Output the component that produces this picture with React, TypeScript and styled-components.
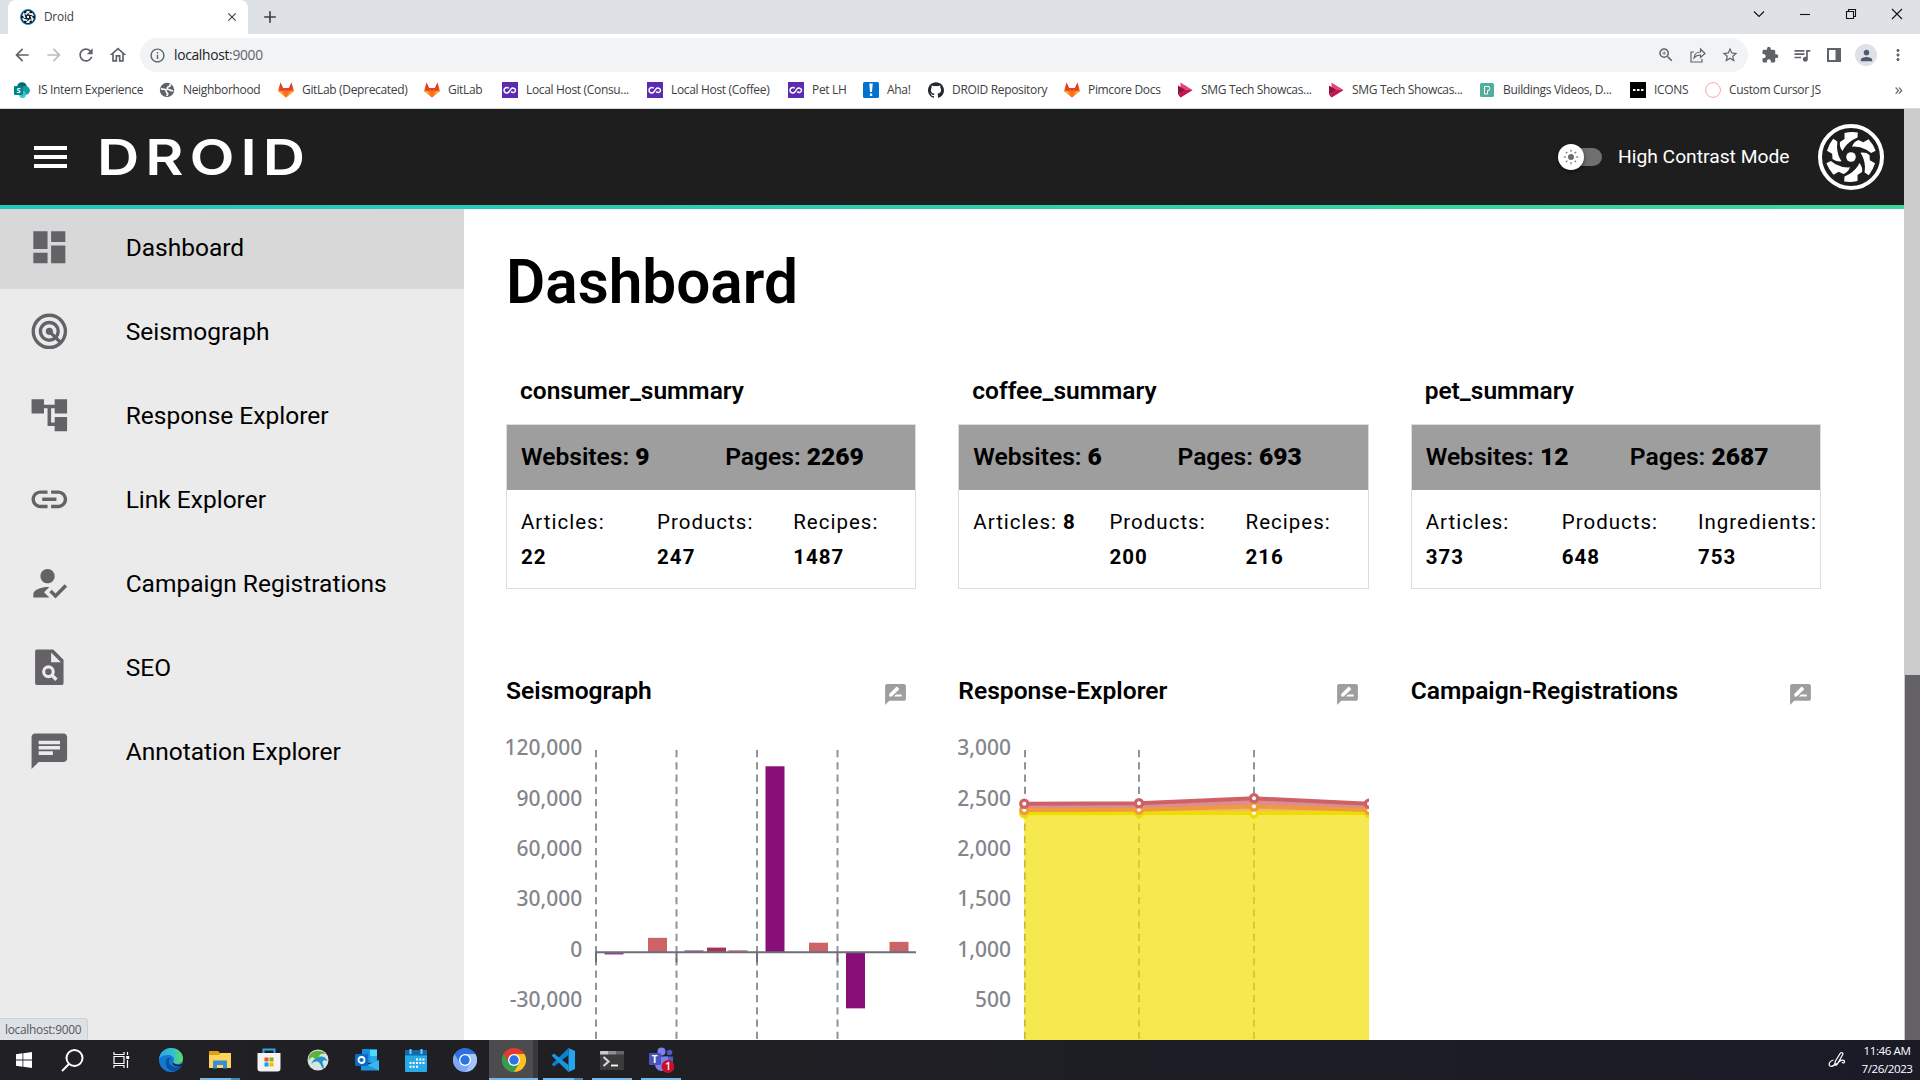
import React from "react";
import styled, { createGlobalStyle, css } from "styled-components";
import {
  MdAccountTree,
  MdAdd,
  MdArrowBack,
  MdArrowForward,
  MdChat,
  MdClose,
  MdDashboard,
  MdExtension,
  MdHowToReg,
  MdInfoOutline,
  MdLink,
  MdMoreVert,
  MdOutlineHome,
  MdPerson,
  MdQueueMusic,
  MdRateReview,
  MdRefresh,
  MdStarBorder,
  MdZoomIn,
} from "react-icons/md";
import { SiGithub } from "react-icons/si";

const uiFont = '"Open Sans", "Noto Sans", sans-serif';
const appFont = 'Roboto, "Liberation Sans", sans-serif';

const GlobalStyle = createGlobalStyle`
  * { box-sizing: border-box; }
  body { margin: 0; background: #fff; overflow: hidden; }
  h1, h2, p { margin: 0; }
  svg { display: block; flex: none; }
`;

const Screen = styled.div`
  width: 1920px;
  height: 1080px;
  display: flex;
  flex-direction: column;
  overflow: hidden;
  font-family: ${appFont};
  color: #000;
`;

/* ---------- browser chrome ---------- */

const TabStrip = styled.div`
  height: 34px;
  flex: none;
  display: flex;
  padding-left: 8px;
  background: #dee1e6;
  font-family: ${uiFont};
`;

const Tab = styled.div`
  width: 240px;
  height: 34px;
  display: flex;
  align-items: center;
  padding: 0 9px 0 12px;
  border-radius: 8px 8px 0 0;
  background: #fff;
  color: #3c4043;
`;

const TabTitle = styled.span`
  flex: 1;
  padding: 0 0 2px 8px;
  font-size: 11.8px;
  letter-spacing: -0.2px;
`;

const NewTab = styled.div`
  display: flex;
  align-items: center;
  padding-left: 12px;
  color: #3c4043;
`;

const WindowControls = styled.div`
  margin-left: auto;
  display: flex;
  height: 34px;
`;

const WindowButton = styled.div`
  width: 46px;
  height: 34px;
  display: flex;
  align-items: center;
  justify-content: center;
  padding-bottom: 6px;
`;

const Toolbar = styled.div`
  height: 39px;
  flex: none;
  display: flex;
  align-items: center;
  padding: 4px 6px 1px;
  background: #fff;
  font-family: ${uiFont};
  color: #5f6368;
`;

const ToolButton = styled.div<{ $dim?: boolean }>`
  width: 32px;
  display: flex;
  justify-content: center;
  color: ${(p) => (p.$dim ? "#bbbdbf" : "#5f6368")};
`;

const Address = styled.div`
  width: 1608px;
  height: 34px;
  margin-left: 6px;
  margin-right: 6px;
  padding: 0 2px 0 9px;
  display: flex;
  align-items: center;
  border-radius: 17px;
  background: #f1f3f4;
`;

const Url = styled.span`
  flex: 1;
  padding: 0 0 1px 8px;
  font-size: 13.8px;
  letter-spacing: -0.3px;
  color: #5f6368;
  b { font-weight: 400; color: #202124; }
`;

const Avatar = styled.div`
  width: 22px;
  height: 22px;
  display: flex;
  align-items: center;
  justify-content: center;
  border-radius: 50%;
  background: #dee1e6;
  color: #4f5b70;
`;

const BookmarkBar = styled.div`
  height: 36px;
  flex: none;
  display: flex;
  align-items: center;
  padding: 0 17px 1px 14px;
  border-bottom: 1px solid #d5d9da;
  background: #fff;
  font-family: ${uiFont};
`;

const Bookmark = styled.div<{ $w: number }>`
  width: ${(p) => p.$w}px;
  flex: none;
  display: flex;
  align-items: center;
  gap: 8px;
  white-space: nowrap;
  color: #3c4043;
`;

const BookmarkLabel = styled.span`
  padding-bottom: 2px;
  font-size: 12px;
  letter-spacing: -0.33px;
`;

const More = styled.span`
  margin-left: auto;
  padding-bottom: 3px;
  font-size: 17px;
  line-height: 20px;
  color: #5f6368;
`;

/* ---------- application ---------- */

const Viewport = styled.div`
  height: 931px;
  flex: none;
  display: flex;
`;

const Page = styled.div`
  width: 1904px;
  display: flex;
  flex-direction: column;
`;

const Scrollbar = styled.div`
  width: 16px;
  padding-left: 1px;
  display: flex;
  flex-direction: column;
  justify-content: flex-end;
  background: #cbcbcb;
`;

const Thumb = styled.div`
  height: 365px;
  background: #646266;
`;

const Header = styled.header`
  height: 96px;
  flex: none;
  display: flex;
  align-items: center;
  padding: 0 20px 0 34px;
  background: #1e1e1e;
  color: #fff;
`;

const Accent = styled.div`
  height: 4px;
  flex: none;
  background: linear-gradient(90deg, #20c8be, #3ad79b);
`;

const Burger = styled.div`
  width: 33px;
  display: grid;
  gap: 5px;
`;

const BurgerLine = styled.span`
  height: 4px;
  background: #fff;
`;

const Wordmark = styled.div`
  flex: 1;
  margin-left: 30px;
  font-family: Inter, sans-serif;
  font-weight: 600;
  font-size: 49.5px;
  line-height: 60px;
  letter-spacing: 5px;
  transform: scaleX(1.185);
  transform-origin: left;
`;

const Switch = styled.div`
  width: 44px;
  height: 18px;
  margin-right: 16px;
  display: flex;
  align-items: center;
`;

const SwitchTrack = styled.div`
  width: 38px;
  height: 18px;
  margin-left: 6px;
  display: flex;
  align-items: center;
  border-radius: 9px;
  background: #6f6f6f;
`;

const SwitchKnob = styled.div`
  width: 26px;
  height: 26px;
  flex: none;
  margin-left: -6px;
  display: flex;
  align-items: center;
  justify-content: center;
  border-radius: 50%;
  background: #fff;
  box-shadow: 0 2px 4px rgba(0, 0, 0, 0.5);
`;

const SwitchLabel = styled.span`
  width: 200px;
  padding-bottom: 1px;
  font-size: 19.25px;
  white-space: nowrap;
`;

const Body = styled.div`
  flex: 1;
  min-height: 0;
  display: flex;
`;

const Sidebar = styled.nav`
  width: 464px;
  flex: none;
  display: flex;
  flex-direction: column;
  overflow: hidden;
  background: #ebebeb;
`;

const NavItem = styled.div<{ $active?: boolean }>`
  height: 84px;
  flex: none;
  display: flex;
  align-items: center;
  gap: 55.5px;
  padding-left: 27.5px;
  font-size: 24.5px;
  color: #000;
  svg { color: #646266; }
  ${(p) =>
    p.$active &&
    css`
      height: 80px;
      padding-bottom: 4px;
      background: #d8d8d8;
    `}
`;

const StatusBubble = styled.div`
  width: 88px;
  height: 22px;
  margin-top: auto;
  padding-left: 5px;
  border: 1px solid #cdd0d5;
  border-width: 1px 1px 0 0;
  border-radius: 0 4px 0 0;
  background: #dee1e6;
  font-family: ${uiFont};
  font-size: 11.9px;
  line-height: 21px;
  letter-spacing: -0.28px;
  color: #54585d;
`;

const Main = styled.main`
  flex: 1;
  padding: 38px 83px 0 42px;
  overflow: hidden;
`;

const Heading = styled.h1`
  margin-bottom: 58px;
  font-size: 60.3px;
  line-height: 71px;
  font-weight: 600;
`;

const Columns = styled.section`
  display: grid;
  grid-template-columns: repeat(3, minmax(0, 1fr));
  column-gap: 42px;
`;

const SummaryTitle = styled.h2`
  margin-bottom: 18px;
  padding-left: 14px;
  font-size: 24.5px;
  line-height: 30px;
  font-weight: 600;
`;

const Card = styled.div`
  height: 165px;
  border: 1px solid #dddddd;
`;

const Totals = styled.div`
  height: 65px;
  display: grid;
  grid-template-columns: 1fr 1fr;
  background: #9e9e9e;
  font-size: 24.6px;
  line-height: 63px;
  font-weight: 600;
  > span { padding-left: 14px; }
`;

const Counts = styled.div`
  display: grid;
  grid-template-columns: repeat(3, minmax(0, 1fr));
  padding-top: 15px;
  font-size: 20.5px;
  line-height: 34.67px;
  letter-spacing: 1px;
  > span { padding: 0 14px; }
  b { font-weight: 700; }
`;

const Charts = styled(Columns)`
  margin-top: 86px;
`;

const ChartHeader = styled.div`
  height: 30px;
  display: flex;
  justify-content: space-between;
  padding-right: 8.5px;
  svg { margin-top: 7px; color: #9e9e9e; }
`;

const ChartTitle = styled.h2`
  font-size: 24.6px;
  line-height: 32px;
  font-weight: 600;
`;

const ChartSvg = styled.svg`
  width: 100%;
  height: 335px;
  overflow: hidden;
`;

/* ---------- taskbar ---------- */

const Taskbar = styled.div`
  height: 40px;
  flex: none;
  display: flex;
  background: linear-gradient(90deg, #212024, #1f1f24 40%, #1b1b28);
  font-family: ${uiFont};
  color: #fff;
`;

const TaskButton = styled.div<{ $w?: number; $active?: boolean }>`
  width: ${(p) => p.$w ?? 49}px;
  height: 40px;
  flex: none;
  display: flex;
  flex-direction: column;
  align-items: center;
  background: ${(p) => (p.$active ? "linear-gradient(90deg, #4c4c4f 44px, #39393c 44px)" : "none")};
`;

const TaskIcon = styled.div`
  height: 38px;
  display: flex;
  align-items: center;
  padding-top: 2px;
`;

const Underline = styled.div<{ $wide?: boolean; $stacked?: boolean }>`
  width: ${(p) => (p.$wide ? "100%" : "40px")};
  height: 2px;
  background: ${(p) =>
    p.$stacked ? "linear-gradient(90deg, #76b9ed 78%, #4f84ab 78%)" : "#76b9ed"};
`;

const Tray = styled.div`
  margin-left: auto;
  display: flex;
  align-items: center;
  gap: 8px;
`;

const Clock = styled.div`
  width: 66px;
  display: grid;
  padding-bottom: 1px;
  font-size: 11.6px;
  line-height: 18px;
  letter-spacing: -0.42px;
  text-align: center;
`;

/* ---------- drawings ---------- */

const Turbine = ({ size, color, ring, back }: { size: number; color: string; ring: string; back: string }) => (
  <svg width={size} height={size} viewBox="-33 -33 66 66">
    <circle r="31" fill={back} stroke={ring} strokeWidth="4" />
    {[0, 60, 120, 180, 240, 300].map((a) => (
      <path
        key={a}
        transform={`rotate(${a})`}
        fill={color}
        d="M-6.500-24Q0-25.500 6.800-24.500L6.500-19.500L1.500-17Q-5.500-12.500-8.500-6Q-12-10.500-11-15L-6.500-18Z"
      />
    ))}
    <circle r="4.800" fill={color} />
  </svg>
);

const SeismographIcon = () => (
  <svg width="42.670" height="42.670" viewBox="0 0 24 24" fill="none" stroke="currentColor" strokeWidth="1.900">
    <circle cx="12" cy="12" r="9.050" />
    <circle cx="12" cy="12" r="5" />
    <circle cx="12" cy="12" r="2" fill="currentColor" stroke="none" />
    <path d="M12 12l6.600 6.600" />
  </svg>
);

const FileSearchIcon = () => (
  <svg width="42.670" height="42.670" viewBox="0 0 24 24">
    <path
      fill="currentColor"
      fillRule="evenodd"
      d="M5 2h9.200L20 7.800V21a1 1 0 0 1-1 1H5a1 1 0 0 1-1-1V3a1 1 0 0 1 1-1zM13 3.700V9.200h5.500z"
    />
    <circle cx="11.500" cy="14.500" r="2.700" fill="none" stroke="#ebebeb" strokeWidth="1.800" />
    <path d="M13.400 16.400l2.600 2.600" stroke="#ebebeb" strokeWidth="1.900" />
  </svg>
);

const GitlabMark = () => (
  <svg width="16" height="16" viewBox="0 0 16 16">
    <path fill="#fc6d26" d="M2.500 0.500L5 6h6l2.500-5.500L16 9l-8 6.500L0 9z" />
    <path fill="#e24329" d="M2.500.5L5 6h6L13.500.5 15 7l-7 8L1 7z" />
    <path fill="#fca326" d="M0 9l4.500 0L8 15.500zM16 9h-4.500L8 15.500z" />
    <path fill="#fc6d26" d="M4 8.500h8l-4 7z" />
  </svg>
);

const InfinityMark = () => (
  <svg width="16" height="16" viewBox="0 0 16 16">
    <rect width="16" height="16" fill="#5c2bb0" />
    <path
      d="M6.800 6.300C4.800 4.600 2 5.800 2 8.200s2.800 3.600 4.800 1.900l2-3c1.600-2 4.700-.9 4.700 1.200s-2.700 3.100-4.300 1.200"
      fill="none"
      stroke="#fff"
      strokeWidth="1.500"
    />
  </svg>
);

const StreamMark = () => (
  <svg width="16" height="16" viewBox="0 0 16 16">
    <path fill="#e5457e" d="M3.500.5L15.500 8l-12 7.500z" />
    <path fill="#8e1440" d="M1 3.500L8.500 8 1 12.500z" />
    <path fill="#c3174a" d="M1 12.500L8.500 8h7l-12 7.500z" />
  </svg>
);

const marks = {
  sharepoint: (
    <svg width="16" height="16" viewBox="0 0 16 16">
      <circle cx="8" cy="5" r="4.800" fill="#036c70" />
      <circle cx="11.500" cy="8.500" r="4.400" fill="#1a9ba1" />
      <circle cx="8.500" cy="12.500" r="3.400" fill="#37c6d0" />
      <rect y="4" width="9" height="9" rx="1" fill="#038387" />
      <text x="2.400" y="11.200" fontSize="7.500" fontWeight="700" fill="#fff">S</text>
    </svg>
  ),
  globe: (
    <svg width="16" height="16" viewBox="0 0 16 16">
      <circle cx="8" cy="8" r="7.200" fill="#5f6368" />
      <path d="M2 6.500c2 1.500 4 0 5 1.500s-.5 2 1 3 .500 2-.500 3M14 8.500c-2 1-2.500-1-4.500-1S8 5 10 4.500s1-2 1-2.500" fill="none" stroke="#fff" strokeWidth="1.600" />
    </svg>
  ),
  gitlab: <GitlabMark />,
  infinity: <InfinityMark />,
  aha: (
    <svg width="16" height="16" viewBox="0 0 16 16">
      <rect width="16" height="16" rx="1.500" fill="#0073cf" />
      <path d="M6.300 1.500h3.400L9 10H7z" fill="#fff" />
      <rect x="6.900" y="11.500" width="2.300" height="2.500" fill="#fff" />
    </svg>
  ),
  github: <SiGithub size={16} color="#24292f" />,
  stream: <StreamMark />,
  pad: (
    <svg width="16" height="16" viewBox="0 0 16 16">
      <rect x="1" y="1" width="14" height="14" rx="1.500" fill="#52ad9c" />
      <path d="M5.500 12V4.500h4.500q1.500 2 0 4H8.500V12z" fill="none" stroke="#fff" strokeWidth="1" />
    </svg>
  ),
  dots: (
    <svg width="16" height="16" viewBox="0 0 16 16">
      <rect width="16" height="16" fill="#000" />
      <path d="M3 7h2.500v2H3zM7 7h2.500v2H7zM11 7h2.500v2H11z" fill="#fff" />
    </svg>
  ),
  circle: (
    <svg width="16" height="16" viewBox="0 0 16 16">
      <circle cx="8" cy="8" r="7.400" fill="#fff" stroke="#f8a5a5" strokeWidth="1" />
    </svg>
  ),
};

const bookmarks: { mark: keyof typeof marks; label: string; width: number }[] = [
  { mark: "sharepoint", label: "IS Intern Experience", width: 145 },
  { mark: "globe", label: "Neighborhood", width: 119 },
  { mark: "gitlab", label: "GitLab (Deprecated)", width: 146 },
  { mark: "gitlab", label: "GitLab", width: 78 },
  { mark: "infinity", label: "Local Host (Consu...", width: 145 },
  { mark: "infinity", label: "Local Host (Coffee)", width: 141 },
  { mark: "infinity", label: "Pet LH", width: 75 },
  { mark: "aha", label: "Aha!", width: 65 },
  { mark: "github", label: "DROID Repository", width: 136 },
  { mark: "gitlab", label: "Pimcore Docs", width: 113 },
  { mark: "stream", label: "SMG Tech Showcas...", width: 151 },
  { mark: "stream", label: "SMG Tech Showcas...", width: 151 },
  { mark: "pad", label: "Buildings Videos, D...", width: 151 },
  { mark: "dots", label: "ICONS", width: 75 },
  { mark: "circle", label: "Custom Cursor JS", width: 120 },
];

const navItems = [
  { label: "Dashboard", icon: <MdDashboard size={42.67} /> },
  { label: "Seismograph", icon: <SeismographIcon /> },
  { label: "Response Explorer", icon: <MdAccountTree size={42.67} /> },
  { label: "Link Explorer", icon: <MdLink size={42.67} /> },
  { label: "Campaign Registrations", icon: <MdHowToReg size={42.67} /> },
  { label: "SEO", icon: <FileSearchIcon /> },
  { label: "Annotation Explorer", icon: <MdChat size={42.67} /> },
];

const summaries = [
  { name: "consumer_summary", websites: 9, pages: 2269, counts: [["Articles", 22], ["Products", 247], ["Recipes", 1487]] },
  { name: "coffee_summary", websites: 6, pages: 693, counts: [["Articles", 8], ["Products", 200], ["Recipes", 216]] },
  { name: "pet_summary", websites: 12, pages: 2687, counts: [["Articles", 373], ["Products", 648], ["Ingredients", 753]] },
];

const AxisLabels = ({ labels, right }: { labels: string[]; right: number }) => (
  <g fontFamily='"Noto Sans", sans-serif' fontSize="21" fontWeight="500" fill="#85858c" textAnchor="end">
    {labels.map((l, i) => (
      <text key={l} x={right} y={50.1 + i * 50.4}>{l}</text>
    ))}
  </g>
);

const GridLines = ({ xs }: { xs: number[] }) => (
  <g stroke="#949494" strokeWidth="2" strokeDasharray="7.250 5">
    {xs.map((x) => (
      <line key={x} x1={x} x2={x} y1="45" y2="335" />
    ))}
  </g>
);

const bars = [
  { x: 98.5, v: -1300, fill: "#9b3b90" },
  { x: 142, v: 8600, fill: "#cc6366" },
  { x: 178.5, v: 1200, fill: "#a95fa3" },
  { x: 201, v: 2800, fill: "#a93056" },
  { x: 222.5, v: 1300, fill: "#dd8282" },
  { x: 259.5, v: 110500, fill: "#870f77" },
  { x: 303, v: 5700, fill: "#cc6366" },
  { x: 340, v: -33300, fill: "#870f77" },
  { x: 383.5, v: 6200, fill: "#cc6366" },
];

const SeismographChart = () => {
  const zero = 247.3;
  const grid = [90, 170.5, 251, 331.5];
  return (
    <ChartSvg>
      <AxisLabels right={76.3} labels={["120,000", "90,000", "60,000", "30,000", "0", "-30,000"]} />
      <GridLines xs={grid} />
      {bars.map((b) => {
        const h = (Math.abs(b.v) / 30000) * 50.5;
        return <rect key={b.x} x={b.x} width="19" y={b.v > 0 ? zero - h : zero} height={h} fill={b.fill} />;
      })}
      <path d={`M89 ${zero}H411${grid.map((x) => `M${x} ${zero}v10`).join("")}`} stroke="#6e7079" strokeWidth="2" fill="none" />
    </ChartSvg>
  );
};

const series = [
  { line: "#eedd05", fill: "#f1e00b", ys: [108.3, 108, 108, 108] },
  { line: "#f09a3e", fill: "#f09a3e", ys: [105, 104.8, 101.5, 105] },
  { line: "#cd6166", fill: "#cd6166", ys: [98.7, 98.3, 93.3, 98.7] },
];

const ResponseChart = () => {
  const xs = [66.3, 181, 296, 411];
  return (
    <ChartSvg>
      <AxisLabels right={53} labels={["3,000", "2,500", "2,000", "1,500", "1,000", "500"]} />
      <GridLines xs={[67, 181, 296]} />
      {series.map((s, n) => {
        const top = xs.map((x, i) => `${x},${s.ys[i]}`).join(" ");
        const base = n === 0 ? `411,335 66.300,335` : xs.map((x, i) => `${x},${series[n - 1].ys[i]}`).reverse().join(" ");
        return <polygon key={s.line} points={`${top} ${base}`} fill={s.fill} fillOpacity="0.72" />;
      })}
      {series.map((s) => (
        <g key={s.line} stroke={s.line} strokeWidth="4" fill="none">
          <polyline points={xs.map((x, i) => `${x},${s.ys[i]}`).join(" ")} />
          {xs.map((x, i) => (
            <circle key={x} cx={x} cy={s.ys[i]} r="3.600" fill="#fff" strokeWidth="3.200" />
          ))}
        </g>
      ))}
    </ChartSvg>
  );
};

const EdgeIcon = () => (
  <svg width="24" height="24" viewBox="0 0 24 24">
    <defs>
      <linearGradient id="edgeTop" x1="0" x2="1">
        <stop offset="0" stopColor="#2aa5e0" />
        <stop offset=".6" stopColor="#35c1d0" />
        <stop offset="1" stopColor="#62de55" />
      </linearGradient>
    </defs>
    <circle cx="12" cy="12" r="12" fill="#1379d0" />
    <path d="M0 11C1 4 6 0 12 0c7 0 12 5 12 10 0 4-3 6-6 6-2 0-4-1-4-2 0-.5 1-1 1-2.500C15 8 11 6.500 8 7c-4 .5-7 2-8 4z" fill="url(#edgeTop)" />
    <path d="M8 11c-3 6 1 13 8 12 3-.5 5-2 6.500-5-5 2.500-11 1-12.500-3-.5-2 .5-4 1.500-5-1.500-.5-2.800 0-3.500 1z" fill="#0c4fa0" />
    <path d="M14.500 14.500c1.500 2.500 5 3 9 1l-1 2.500c-4 1-8 0-9-2.500z" fill="#202024" />
  </svg>
);

const FolderIcon = () => (
  <svg width="22" height="20" viewBox="0 0 22 20">
    <path d="M0 1h9l2 2h10v4H0z" fill="#e0a010" />
    <path d="M0 5h10l2-2h10v15H0z" fill="#ffd35c" />
    <path d="M4 18.500V11.500q0-1 1-1h12q1 0 1 1v7h-4V15H8v3.500z" fill="#3590dc" />
  </svg>
);

const StoreIcon = () => (
  <svg width="24" height="24" viewBox="0 0 24 24">
    <path d="M6.500 6V1.500h11V6" fill="none" stroke="#2fa7e7" strokeWidth="2" />
    <path d="M.500 5h23v15.500a3 3 0 0 1-3 3h-17a3 3 0 0 1-3-3z" fill="#f3f3f3" />
    <path d="M7.500 9.500h4v4h-4z" fill="#f25022" />
    <path d="M12.500 9.500h4v4h-4z" fill="#7fba00" />
    <path d="M7.500 14.500h4v4h-4z" fill="#00a4ef" />
    <path d="M12.500 14.500h4v4h-4z" fill="#ffb900" />
  </svg>
);

const SwirlIcon = () => (
  <svg width="22" height="22" viewBox="0 0 22 22">
    <circle cx="11" cy="11" r="10.500" fill="#d7e5e2" />
    <path d="M2 7C5 1 14 0 19 5c-4-1-7 0-7 3s-3 3-5 1-4 0-5.500 3z" fill="#5fb238" />
    <path d="M11 9c3-3 8-1 9.500 3-2-1-5-1-5 1s2 4 1 7c-2-1-2-4-4-6s-5-2-8 1c1-4 4-6 6.500-6z" fill="#2493c6" />
  </svg>
);

const OutlookIcon = () => (
  <svg width="24" height="22" viewBox="0 0 24 22">
    <rect x="7" width="15" height="14" fill="#1490df" />
    <path d="M15 1h7v6h-7z" fill="#50d9ff" />
    <path d="M15 7h7v6h-7z" fill="#28a8ea" />
    <path d="M6 21.500V12l9 5 9-5.500v10z" fill="#1f94dd" />
    <path d="M24 11v10.500L12 16z" fill="#35b8f1" />
    <rect y="5" width="13" height="12" rx="1" fill="#0a6ac4" />
    <circle cx="6.500" cy="11" r="3" fill="none" stroke="#fff" strokeWidth="1.800" />
  </svg>
);

const CalendarIcon = () => (
  <svg width="22" height="23" viewBox="0 0 22 23">
    <rect y="1" width="22" height="22" rx="1" fill="#29aae8" />
    <rect y="1" width="22" height="5.500" fill="#136ba8" />
    <path d="M4.500 0h2v5h-2zM15.500 0h2v5h-2z" fill="#6fd3f7" />
    <path
      d="M11 9.500h2v2h-2zM14.300 9.500h2v2h-2zM17.500 9.500h2v2h-2zM4.500 13h2v2h-2zM7.700 13h2v2h-2zM11 13h2v2h-2zM14.300 13h2v2h-2zM17.500 13h2v2h-2zM4.500 16.700h2v2h-2zM7.700 16.700h2v2h-2zM11 16.700h2v2h-2z"
      fill="#fff"
    />
  </svg>
);

const ChromeIcon = ({ a, b, c, core }: { a: string; b: string; c: string; core: string }) => (
  <svg width="24" height="24" viewBox="0 0 24 24">
    <circle cx="12" cy="12" r="12" fill={a} />
    <path d="M1.600 6A12 12 0 0 0 12 24L17.200 15H6.800z" fill={b} />
    <path d="M12 24A12 12 0 0 0 22.400 6H12L17.200 15z" fill={c} />
    <circle cx="12" cy="12" r="6" fill="#fff" />
    <circle cx="12" cy="12" r="4.700" fill={core} />
  </svg>
);

const CodeIcon = () => (
  <svg width="24" height="24" viewBox="0 0 24 24">
    <path d="M17.500 0L24 3v18l-6.500 3z" fill="#25a5ef" />
    <path d="M17.500 0v7L3 18.500 .500 16.500z" fill="#0a7fcb" />
    <path d="M17.500 24v-7L3 5.500 .500 7.500z" fill="#1b93dc" />
  </svg>
);

const TerminalIcon = () => (
  <svg width="24" height="19" viewBox="0 0 24 19">
    <rect width="24" height="19" rx="1" fill="#3b3b3b" />
    <path d="M0 3.500V1q0-1 1-1h7v3.500z" fill="#c9c9c9" />
    <path d="M8 0h8v3.500H8z" fill="#8f8f8f" />
    <path d="M16 0h7q1 0 1 1v2.500h-8z" fill="#666" />
    <path d="M3.500 6l5 4.500-5 4.500" fill="none" stroke="#d5d5d5" strokeWidth="2.200" />
    <path d="M11 14.500h7" stroke="#fff" strokeWidth="1.800" />
  </svg>
);

const TeamsIcon = () => (
  <svg width="26" height="26" viewBox="0 0 26 26">
    <circle cx="13.500" cy="4.500" r="4" fill="#7b83eb" />
    <circle cx="21.500" cy="5.500" r="2.800" fill="#5059c9" />
    <path d="M16 9.500h9v9h-9z" fill="#5059c9" />
    <path d="M7 9.500h13v8a6.500 6.500 0 0 1-13 0z" fill="#7b83eb" />
    <rect x="1" y="6" width="12" height="12" rx="1" fill="#4b53bc" />
    <text x="3.800" y="15.500" fontFamily="Open Sans" fontSize="10" fontWeight="700" fill="#fff">T</text>
    <circle cx="20" cy="19.500" r="6.500" fill="#c8102e" />
    <text x="17.300" y="23.200" fontFamily="Open Sans" fontSize="10" fontWeight="600" fill="#fff">1</text>
  </svg>
);

const systemButtons = [
  <svg key="start" width="16" height="16" viewBox="0 0 16 16" fill="#fff">
    <path d="M0 2.200L6.500 1.300V7.600H0zM7.300 1.200L16 0V7.600H7.300zM0 8.400h6.500v6.300L0 13.800zM7.300 8.400H16V16l-8.700-1.200z" />
  </svg>,
  <svg key="search" width="23" height="23" viewBox="0 0 23 23" fill="none" stroke="#fff" strokeWidth="2">
    <circle cx="13.500" cy="9" r="8" />
    <path d="M8 15l-7 7" />
  </svg>,
  <svg key="view" width="17" height="16" viewBox="0 0 17 16" fill="none" stroke="#fff" strokeWidth="1.200">
    <path d="M1 4.500h10v7H1zM1 0v2.500h10V0M1 16v-2.500h10V16M14.500 0v3M14.500 8v8" />
    <path d="M13.200 4h3v3h-3z" fill="#fff" stroke="none" />
  </svg>,
];

const apps: { icon: React.ReactNode; running?: boolean; stacked?: boolean; active?: boolean }[] = [
  { icon: <EdgeIcon /> },
  { icon: <FolderIcon />, running: true, stacked: true },
  { icon: <StoreIcon /> },
  { icon: <SwirlIcon /> },
  { icon: <OutlookIcon /> },
  { icon: <CalendarIcon /> },
  { icon: <ChromeIcon a="#2f6fe0" b="#7fa8f2" c="#a6c3f8" core="#2a74e8" /> },
  { icon: <ChromeIcon a="#e33b2e" b="#2da14c" c="#fcc31e" core="#2a74e8" />, running: true, active: true },
  { icon: <CodeIcon />, running: true, stacked: true },
  { icon: <TerminalIcon />, running: true },
  { icon: <TeamsIcon />, running: true },
];

const WindowGlyph = ({ d }: { d: string }) => (
  <svg width="12" height="12" viewBox="0 0 12 12" fill="none" stroke="#111" strokeWidth="1.100">
    <path d={d} />
  </svg>
);

const App = () => (
  <Screen>
    <GlobalStyle />
    <TabStrip>
      <Tab>
        <Turbine size={16} color="#fff" ring="#1897d8" back="#0b1a26" />
        <TabTitle>Droid</TabTitle>
        <MdClose size={14} />
      </Tab>
      <NewTab>
        <MdAdd size={20} />
      </NewTab>
      <WindowControls>
        <WindowButton><WindowGlyph d="M1 3.500l5 5 5-5" /></WindowButton>
        <WindowButton><WindowGlyph d="M1 6.500h10" /></WindowButton>
        <WindowButton><WindowGlyph d="M1.500 3.500h7v7h-7zM3.500 3.500v-2h7v7h-2" /></WindowButton>
        <WindowButton><WindowGlyph d="M1 1l10 10M11 1L1 11" /></WindowButton>
      </WindowControls>
    </TabStrip>
    <Toolbar>
      <ToolButton><MdArrowBack size={20} /></ToolButton>
      <ToolButton $dim><MdArrowForward size={20} /></ToolButton>
      <ToolButton><MdRefresh size={20} /></ToolButton>
      <ToolButton><MdOutlineHome size={20} /></ToolButton>
      <Address>
        <MdInfoOutline size={17} />
        <Url><b>localhost</b>:9000</Url>
        <ToolButton><MdZoomIn size={18} /></ToolButton>
        <ToolButton>
          <svg width="16" height="16" viewBox="0 0 16 16" fill="none" stroke="currentColor" strokeWidth="1.200">
            <path d="M4 5H1v10h11v-3M4 11c.5-4 3-6 6.500-6V2L15 6.500 10.500 10.500V8C8 8 6 8.500 4 11z" />
          </svg>
        </ToolButton>
        <ToolButton><MdStarBorder size={18} /></ToolButton>
      </Address>
      <ToolButton><MdExtension size={18} /></ToolButton>
      <ToolButton><MdQueueMusic size={20} /></ToolButton>
      <ToolButton>
        <svg width="14" height="14" viewBox="0 0 14 14">
          <path fill="currentColor" fillRule="evenodd" d="M0 0h14v14H0zM2 2v10h6.500V2z" />
        </svg>
      </ToolButton>
      <ToolButton>
        <Avatar><MdPerson size={17} /></Avatar>
      </ToolButton>
      <ToolButton><MdMoreVert size={18} /></ToolButton>
    </Toolbar>
    <BookmarkBar>
      {bookmarks.map((b, i) => (
        <Bookmark key={i} $w={b.width}>
          {marks[b.mark]}
          <BookmarkLabel>{b.label}</BookmarkLabel>
        </Bookmark>
      ))}
      <More>»</More>
    </BookmarkBar>
    <Viewport>
      <Page>
        <Header>
          <Burger>
            <BurgerLine />
            <BurgerLine />
            <BurgerLine />
          </Burger>
          <Wordmark>DROID</Wordmark>
          <Switch>
            <SwitchTrack>
              <SwitchKnob>
                <svg width="16" height="16" viewBox="-8 -8 16 16">
                  <circle r="3" fill="#6b6b6b" />
                  {[0, 45, 90, 135, 180, 225, 270, 315].map((a) => (
                    <path key={a} transform={`rotate(${a})`} d="M0-5.200v-2" stroke="#777" strokeWidth="1.300" />
                  ))}
                </svg>
              </SwitchKnob>
            </SwitchTrack>
          </Switch>
          <SwitchLabel>High Contrast Mode</SwitchLabel>
          <Turbine size={66} color="#fff" ring="#fff" back="none" />
        </Header>
        <Accent />
        <Body>
          <Sidebar>
            {navItems.map((item, i) => (
              <NavItem key={item.label} $active={i === 0}>
                {item.icon}
                {item.label}
              </NavItem>
            ))}
            <StatusBubble>localhost:9000</StatusBubble>
          </Sidebar>
          <Main>
            <Heading>Dashboard</Heading>
            <Columns>
              {summaries.map((s) => (
                <div key={s.name}>
                  <SummaryTitle>{s.name}</SummaryTitle>
                  <Card>
                    <Totals>
                      <span>Websites: <b>{s.websites}</b></span>
                      <span>Pages: <b>{s.pages}</b></span>
                    </Totals>
                    <Counts>
                      {s.counts.map(([label, n]) => (
                        <span key={label}>{label}: <b>{n}</b></span>
                      ))}
                    </Counts>
                  </Card>
                </div>
              ))}
            </Columns>
            <Charts>
              {["Seismograph", "Response-Explorer", "Campaign-Registrations"].map((name, i) => (
                <div key={name}>
                  <ChartHeader>
                    <ChartTitle>{name}</ChartTitle>
                    <MdRateReview size={25} />
                  </ChartHeader>
                  {i === 0 && <SeismographChart />}
                  {i === 1 && <ResponseChart />}
                </div>
              ))}
            </Charts>
          </Main>
        </Body>
      </Page>
      <Scrollbar>
        <Thumb />
      </Scrollbar>
    </Viewport>
    <Taskbar>
      {systemButtons.map((icon, i) => (
        <TaskButton key={i} $w={i === 2 ? 50 : 48}>
          <TaskIcon>{icon}</TaskIcon>
        </TaskButton>
      ))}
      {apps.map((app, i) => (
        <TaskButton key={i} $active={app.active}>
          <TaskIcon>{app.icon}</TaskIcon>
          {app.running && <Underline $wide={app.active} $stacked={app.stacked} />}
        </TaskButton>
      ))}
      <Tray>
        <svg width="18" height="18" viewBox="0 0 18 18" fill="none" stroke="#fff" strokeWidth="1.200">
          <path d="M6.500 14l1-4L12.500 2q2-1 2.500 1L10 12zM6.500 14q2 1 3.500-2M5.500 9C2 9.500 0 13 2 15q2 1 4-1M11 11c2-3 6-2 5.500 0-.5 1.500-2 1-2.500 0" />
        </svg>
        <Clock>
          <span>11:46 AM</span>
          <span>7/26/2023</span>
        </Clock>
      </Tray>
    </Taskbar>
  </Screen>
);

export default App;
